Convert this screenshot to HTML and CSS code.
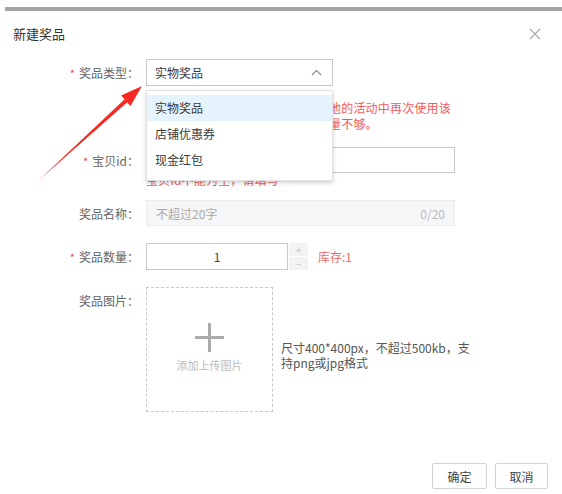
FILE: index.html
```html
<!DOCTYPE html>
<html lang="zh-CN">
<head>
<meta charset="utf-8">
<title>新建奖品</title>
<link rel="stylesheet" href="styles.css">
</head>
<body>
<div class="page">
  <div class="topbar"></div>
  <div class="header">
    <span class="title">新建奖品</span>
    <span class="close" aria-label="关闭">
      <svg width="12" height="12" viewBox="0 0 12 12"><path d="M1 1 L11 11 M11 1 L1 11" stroke="#aaa" stroke-width="1.1" fill="none"/></svg>
    </span>
  </div>

  <div class="form">
    <div class="row r1">
      <div class="label"><span class="star">*</span>奖品类型：</div>
      <div class="field">
        <div class="select">
          <span>实物奖品</span>
          <svg class="chev" width="11" height="7" viewBox="0 0 11 7"><path d="M1 6 L5.5 1.5 L10 6" stroke="#888" stroke-width="1.1" fill="none"/></svg>
          <ul class="dropdown">
            <li class="active">实物奖品</li>
            <li>店铺优惠券</li>
            <li>现金红包</li>
          </ul>
        </div>
        <div class="msg m1">实物奖品发放完成之后，可以在其他的活动中再次使用该<br>奖品，请注意活动期间内商品库存量不够。</div>
      </div>
    </div>

    <div class="row r2">
      <div class="label"><span class="star">*</span>宝贝id：</div>
      <div class="field">
        <div class="input wide"></div>
        <div class="msg m2">宝贝id不能为空，请填写</div>
      </div>
    </div>

    <div class="row r3">
      <div class="label">奖品名称：</div>
      <div class="field">
        <div class="input wide disabled"><span class="ph">不超过20字</span><span class="count">0/20</span></div>
      </div>
    </div>

    <div class="row r4">
      <div class="label"><span class="star">*</span>奖品数量：</div>
      <div class="field inline">
        <div class="input num">1</div>
        <div class="steps"><span class="step">+</span><span class="step">−</span></div>
        <span class="stock">库存:1</span>
      </div>
    </div>

    <div class="row r5">
      <div class="label">奖品图片：</div>
      <div class="field inline">
        <div class="upload">
          <span class="plus"></span>
          <span class="uptext">添加上传图片</span>
        </div>
        <div class="hint">尺寸400*400px，不超过500kb，支<br>持png或jpg格式</div>
      </div>
    </div>
  </div>

  <div class="footer">
    <button class="btn">确定</button>
    <button class="btn">取消</button>
  </div>

  <svg class="arrow" width="160" height="200" viewBox="0 0 160 200">
    <polygon points="38,181 124.6,99.2 121.1,95.6 142,86 130.5,106 127,102.4" fill="#f52a22"/>
  </svg>
</div>
</body>
</html>
```

FILE: styles.css
```css
* { box-sizing: border-box; }
html, body { margin: 0; padding: 0; background: #fff; }
body {
  font-family: "Noto Sans CJK SC", "Noto Sans", "Liberation Sans", sans-serif;
  font-size: 12px;
  color: #666;
}
.page { position: relative; width: 562px; height: 494px; overflow: hidden; }
.topbar { margin: 7px 0 0 5px; height: 4px; background: #a4a4a4; }
.header {
  height: 48px;
  display: flex;
  align-items: center;
  justify-content: space-between;
  padding: 0 21px 3px 13px;
}
.title { font-size: 13px; color: #333; }
.close { display: flex; }

.form { display: flex; flex-direction: column; }
.row { display: grid; grid-template-columns: 139px 1fr; column-gap: 7px; }
.r2 { margin-top: 15px; }
.r3 { margin-top: 12px; }
.r4 { margin-top: 16px; }
.r5 { margin-top: 17px; }

.label {
  height: 27px;
  display: flex;
  align-items: center;
  justify-content: flex-end;
  color: #666;
  white-space: nowrap;
}
.star { color: #f04a4a; font-size: 11px; margin-right: 4px; }

.field { display: flex; flex-direction: column; align-items: flex-start; }
.field.inline { flex-direction: row; align-items: center; }

.select {
  position: relative;
  width: 187px;
  height: 27px;
  border: 1px solid #c9c9c9;
  display: flex;
  align-items: center;
  justify-content: space-between;
  padding: 0 10px 0 8px;
  color: #3a3a3a;
}
.chev { margin-top: -1px; }
.dropdown {
  position: absolute;
  left: -1px;
  top: 30px;
  width: 187px;
  margin: 0;
  padding: 4px 0 0;
  list-style: none;
  background: #fff;
  border: 1px solid #e2e2e2;
  box-shadow: 0 2px 4px rgba(0,0,0,0.18);
  height: 91px;
  z-index: 5;
}
.dropdown li { height: 26px; line-height: 26px; padding-left: 8px; color: #3a3a3a; }
.dropdown li.active { background: #e5f3fc; }

.msg { color: #f25b5b; line-height: 16px; white-space: nowrap; letter-spacing: 0.2px; }
.m1 { margin-top: 14px; }
.m2 { margin-top: -1px; }

.input { height: 26px; border: 1px solid #c9c9c9; background: #fff; }
.wide { width: 309px; }
.disabled {
  background: #f5f6f7;
  border-color: #ececec;
  display: flex;
  align-items: center;
  justify-content: space-between;
  padding: 0 9px;
}
.ph { color: #aaa; }
.count { color: #bbb; }
.num {
  width: 142px;
  height: 27px;
  display: flex;
  align-items: center;
  justify-content: center;
  color: #444;
}
.steps { display: flex; flex-direction: column; gap: 1px; margin-left: 1px; }
.step {
  width: 19px;
  height: 13px;
  background: #f3f3f3;
  color: #c4c4c4;
  display: flex;
  align-items: center;
  justify-content: center;
  font-size: 10px;
  line-height: 10px;
  overflow: hidden;
}
.stock { color: #f46a6a; margin-left: 10px; }

.upload {
  width: 127px;
  height: 125px;
  border: 1px dashed #c8c8c8;
  display: flex;
  flex-direction: column;
  align-items: center;
  padding-top: 35px;
}
.plus { position: relative; width: 29px; height: 29px; }
.plus::before, .plus::after { content: ""; position: absolute; background: #ababab; }
.plus::before { left: 0; right: 0; top: 13px; height: 3px; }
.plus::after { top: 0; bottom: 0; left: 13px; width: 3px; }
.uptext { margin-top: 5px; color: #bbb; font-size: 11px; }
.hint { margin-left: 8px; margin-top: 11px; color: #555; line-height: 15px; white-space: nowrap; }

.footer { display: flex; justify-content: flex-end; gap: 8px; padding-right: 14px; margin-top: 51px; }
.btn {
  width: 55px;
  height: 26px;
  border: 1px solid #d4d4d4;
  border-radius: 2px;
  background: #fff;
  font-family: inherit;
  font-size: 12px;
  color: #444;
  padding: 0;
}
.btn + .btn { width: 53px; }

.arrow { position: absolute; left: 0; top: 0; z-index: 6; }
```
